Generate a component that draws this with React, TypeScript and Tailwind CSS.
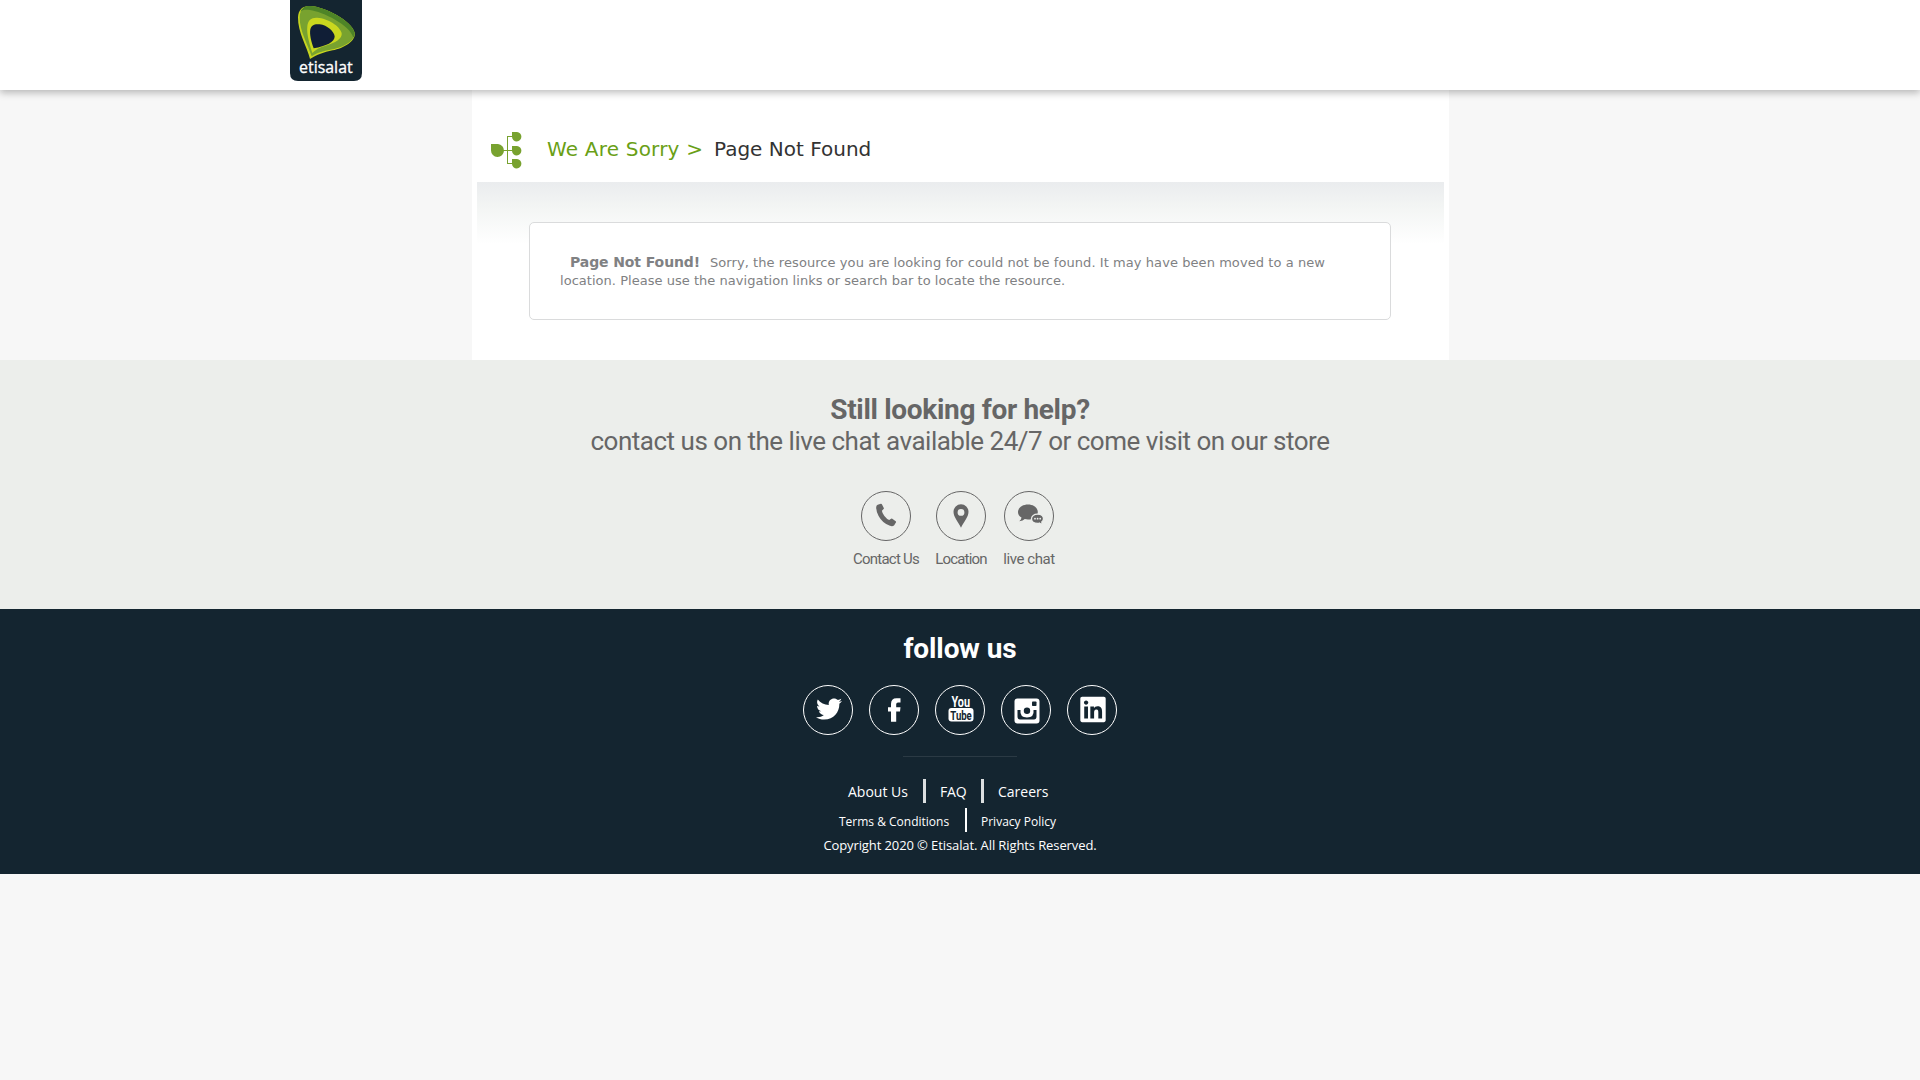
import type { ReactNode } from 'react';
import { FaTwitter, FaLinkedin } from 'react-icons/fa';

function Logo() {
  return (
    <svg className="block h-[81px] w-[72px]" viewBox="15 0 216 243">
      <path d="M15 0H231V219Q231 243 207 243H39Q15 243 15 219Z" fill="#142530" />
      <path d="M75 177C66 140 38 96 39 52C40 28 54 17 76 18C118 20 200 61 209 98C213 124 176 144 143 151C116 157 96 164 75 177Z" fill="#c6d420" />
      <path d="M80 169C70 137 43 92 44 51C45 30 56 18 77 19C118 21 200 62 208 99C211 122 176 142 142 148C116 153 98 158 80 169Z" fill="#78a22f" />
      <path d="M46 35C52 22 63 17 77 18C118 20 200 61 209 98C209 105 208 108 205 113C196 75 112 35 75 30C61 28 52 29 46 35Z" fill="#4e8427" />
      <path d="M82 159C75 136 64 104 67 78C69 60 79 52 97 53C128 55 165 78 170 99C173 116 150 129 122 137C104 142 92 148 82 159Z" fill="#c9d71f" />
      <path d="M86 145C79 126 73 103 76 88C79 75 89 71 104 73C127 76 147 94 149 109C150 126 123 139 86 145Z" fill="#101e36" />
      <text x="42" y="219" textLength="161" lengthAdjust="spacingAndGlyphs" fill="#fff" stroke="#fff" strokeWidth="1" fontSize="49" fontFamily="Open Sans, sans-serif">etisalat</text>
    </svg>
  );
}

function TreeIcon() {
  return (
    <svg className="block h-[37px] w-[31px]" viewBox="0 0 31 37" fill="#78a22f">
      <path d="M0 12H7A6.5 6.5 0 1 1 0 18.5Z" />
      <path d="M21 0H26A4.7 4.7 0 1 1 21 5Z" />
      <path d="M21 14H26A4.7 4.7 0 1 1 21 19Z" />
      <path d="M21 27H26A4.7 4.7 0 1 1 21 32Z" />
      <path d="M16.5 4.5H22M16.5 31.5H22M16.5 4V32M12 18.5H22" stroke="#78a22f" fill="none" />
    </svg>
  );
}

function PhoneIcon() {
  return (
    <svg className="mb-0.5 ml-0.5 h-6 w-6" viewBox="0 0 24 24" fill="#666">
      <path d="M2.7 1.7L5.8.7Q6.5.5 6.9 1.2L8.8 4.9Q9.1 5.6 8.6 6.1L6.9 7.7Q7.3 10.5 9.4 13Q11.7 16 14.2 17.1L16.1 15.8Q16.7 15.4 17.3 15.8L20.7 18.3Q21.3 18.8 20.9 19.5L19.2 22.3Q17.6 23.7 15 22.8Q7.500 20.300 3.600 13Q1 8 1.200 4Q1.400 2.200 2.700 1.700Z" />
    </svg>
  );
}

function PinIcon() {
  return (
    <svg className="h-6 w-4" viewBox="0 0 16 24" fill="#666">
      <path fillRule="evenodd" d="M8 .3A7.500 7.500 0 0 1 15.500 7.800C15.500 13 10.800 18 8 23.700C5.200 18 .5 13 .5 7.800A7.500 7.500 0 0 1 8 .3ZM8 5A3.400 3.400 0 1 0 8 11.800A3.400 3.400 0 1 0 8 5Z" />
    </svg>
  );
}

function ChatIcon() {
  return (
    <svg className="mb-[3px] ml-[3px] block h-[21px] w-[26px]" viewBox="0 0 26 21" fill="#666">
      <path d="M10 0.500C15.500 .5 19.800 3.700 19.800 8.200C19.800 12.700 15.500 15.500 10 15.500Q8.300 15.500 6.800 15.100Q5 17 1.300 17.300Q3.400 15.700 3.500 13.600Q0 11.500 0 8.200C0 3.700 4.500 .5 10 .5Z" />
      <path d="M19.500 10.200C23 10.200 25.500 12.100 25.500 14.700Q25.500 16.600 23.800 17.900Q23.900 19.200 24.700 20.300Q22.700 20.200 21.600 19.100Q20.700 19.400 19.500 19.400C16 19.400 13.500 17.500 13.500 14.800C13.500 12.200 16 10.200 19.500 10.200Z" stroke="#eceeeb" strokeWidth="1.300" />
      <g fill="#eceeeb"><circle cx="17" cy="14.700" r=".9" /><circle cx="19.600" cy="14.700" r=".9" /><circle cx="22.200" cy="14.700" r=".9" /></g>
    </svg>
  );
}

function FacebookIcon() {
  return (
    <svg className="block h-6 w-[13px]" viewBox="0 0 13 24" fill="#fff">
      <path d="M12.500 .3V4.500H10Q8.200 4.500 8.200 6.200V9.300H12.500L12 13.500H8.200V23.700H3V13.500H0V9.300H3V6Q3 .3 8.500 .3Z" />
    </svg>
  );
}

function YouTubeIcon() {
  return (
    <svg className="mb-0.5 ml-0.5 block h-[26px] w-[26px] overflow-visible" viewBox="0 0 26 26" fontFamily="Roboto, sans-serif" fontWeight="700">
      <text x="3.500" y="11" textLength="18.500" lengthAdjust="spacingAndGlyphs" fontSize="14" fill="#fff">You</text>
      <rect x=".5" y="12" width="25" height="13.500" rx="3" fill="#fff" />
      <text x="2.300" y="23.700" textLength="21.500" lengthAdjust="spacingAndGlyphs" fontSize="13" fill="#142530">Tube</text>
    </svg>
  );
}

function InstagramIcon() {
  return (
    <svg className="ml-0.5 mt-0.5 block h-[26px] w-[26px]" viewBox="0 0 26 26">
      <rect x=".5" y=".5" width="25" height="25" rx="3" fill="#fff" />
      <path d="M3.500 12V18.500Q3.500 21.500 6 21.500H20Q22.500 21.500 22.500 18.500V12H19.500Q20.500 19.300 13 19.500Q5.500 19.300 6.500 12Z" fill="#142530" />
      <circle cx="13" cy="12.800" r="3.200" fill="#142530" />
      <rect x="18" y="3.500" width="4.500" height="4.500" rx=".8" fill="#142530" />
    </svg>
  );
}

function HelpLink({ label, width, tracking, children }: { label: string; width: string; tracking: string; children: ReactNode }) {
  return (
    <a className={`flex flex-col items-center ${width}`}>
      <span className="flex h-[50px] w-[50px] items-center justify-center rounded-full border border-[#666]">{children}</span>
      <span className={`mt-2 whitespace-nowrap text-[15px] leading-5 ${tracking}`}>{label}</span>
    </a>
  );
}

function Social({ children }: { children: ReactNode }) {
  return <a className="flex h-[50px] w-[50px] items-center justify-center rounded-full border border-white">{children}</a>;
}

export default function App() {
  return (
    <div className="min-h-screen bg-[#f7f7f7]">
      <header className="relative z-10 h-[90px] bg-white pl-[290px] shadow-[0_3px_7px_rgba(0,0,0,0.25)]">
        <Logo />
      </header>

      <main className="ml-[472px] h-[270px] w-[977px] bg-white px-[5px] font-['DejaVu_Sans',sans-serif]">
        <div className="flex h-[92px] pl-[14px] pt-[42px]">
          <TreeIcon />
          <h1 className="ml-[25px] mt-[5px] flex text-[20px] leading-6 text-[#333]">
            <span className="w-[167px] whitespace-nowrap tracking-[0.2px] text-[#6a9f16]">We Are Sorry &gt;</span>
            <span className="whitespace-nowrap">Page Not Found</span>
          </h1>
        </div>
        <div className="bg-[linear-gradient(to_bottom,#eaecee_0px,#f3f5f4_25px,#ffffff_62px)] pt-10">
          <div className="ml-[52px] h-[98px] w-[862px] rounded-[5px] border border-[#dadbdc] bg-white pl-[30px] pt-[30px] text-[13px] leading-[18px] text-[#808183]">
            <p className="flex items-baseline whitespace-nowrap pl-[10px]">
              <strong className="w-[140px] text-[14px] tracking-[-0.1px]">Page Not Found!</strong>
              <span className="tracking-[0.07px]">Sorry, the resource you are looking for could not be found. It may have been moved to a new</span>
            </p>
            <p className="whitespace-nowrap tracking-[0.03px]">location. Please use the navigation links or search bar to locate the resource.</p>
          </div>
        </div>
      </main>

      <section className="h-[249px] bg-[#eceeeb] pt-[34px] text-center font-['Roboto',sans-serif] text-[#666]">
        <h2 className="text-[28px] font-bold leading-8 tracking-[-0.32px]">Still looking for help?</h2>
        <p className="-mt-px text-[26px] leading-8 tracking-[-0.49px]">contact us on the live chat available 24/7 or come visit on our store</p>
        <div className="ml-[853px] mt-[34px] flex">
          <HelpLink label="Contact Us" width="w-[66px]" tracking="tracking-[-0.75px]"><PhoneIcon /></HelpLink>
          <span className="w-4" />
          <HelpLink label="Location" width="w-[52px]" tracking="tracking-[-0.8px]"><PinIcon /></HelpLink>
          <span className="w-4" />
          <HelpLink label="live chat" width="w-[52px]" tracking="tracking-[-0.45px]"><ChatIcon /></HelpLink>
        </div>
      </section>

      <footer className="h-[265px] bg-[#142530] pt-6 font-['Open_Sans',sans-serif] text-white">
        <h2 className="text-center font-['Roboto',sans-serif] text-[28px] font-bold leading-8 tracking-[-0.1px]">follow us</h2>
        <div className="mt-5 flex justify-center gap-4">
          <Social><FaTwitter className="mb-0.5 ml-0.5 h-[26px] w-[26px]" /></Social>
          <Social><FacebookIcon /></Social>
          <Social><YouTubeIcon /></Social>
          <Social><InstagramIcon /></Social>
          <Social><FaLinkedin className="mb-0.5 ml-0.5 h-[29px] w-[26px]" /></Social>
        </div>
        <div className="mx-auto mt-[21px] h-px w-[114px] bg-[#2b3a44]" />
        <div className="ml-[848px] mt-[22px] flex h-6 text-[14px] leading-[26px]">
          <a className="w-[75px]">About Us</a>
          <span className="w-[3px] bg-[#dcdfe0]" />
          <a className="w-[55px] pl-[14px] tracking-[-0.2px]">FAQ</a>
          <span className="w-[3px] bg-[#dcdfe0]" />
          <a className="pl-[14px]">Careers</a>
        </div>
        <div className="ml-[839px] mt-[5px] flex h-6 text-[12px] leading-7">
          <a className="w-[126px]">Terms &amp; Conditions</a>
          <span className="w-0.5 bg-white" />
          <a className="pl-[14px]">Privacy Policy</a>
        </div>
        <p className="mt-[3px] text-center text-[13px] leading-5 tracking-[-0.1px]">Copyright 2020 © Etisalat. All Rights Reserved.</p>
      </footer>
    </div>
  );
}
